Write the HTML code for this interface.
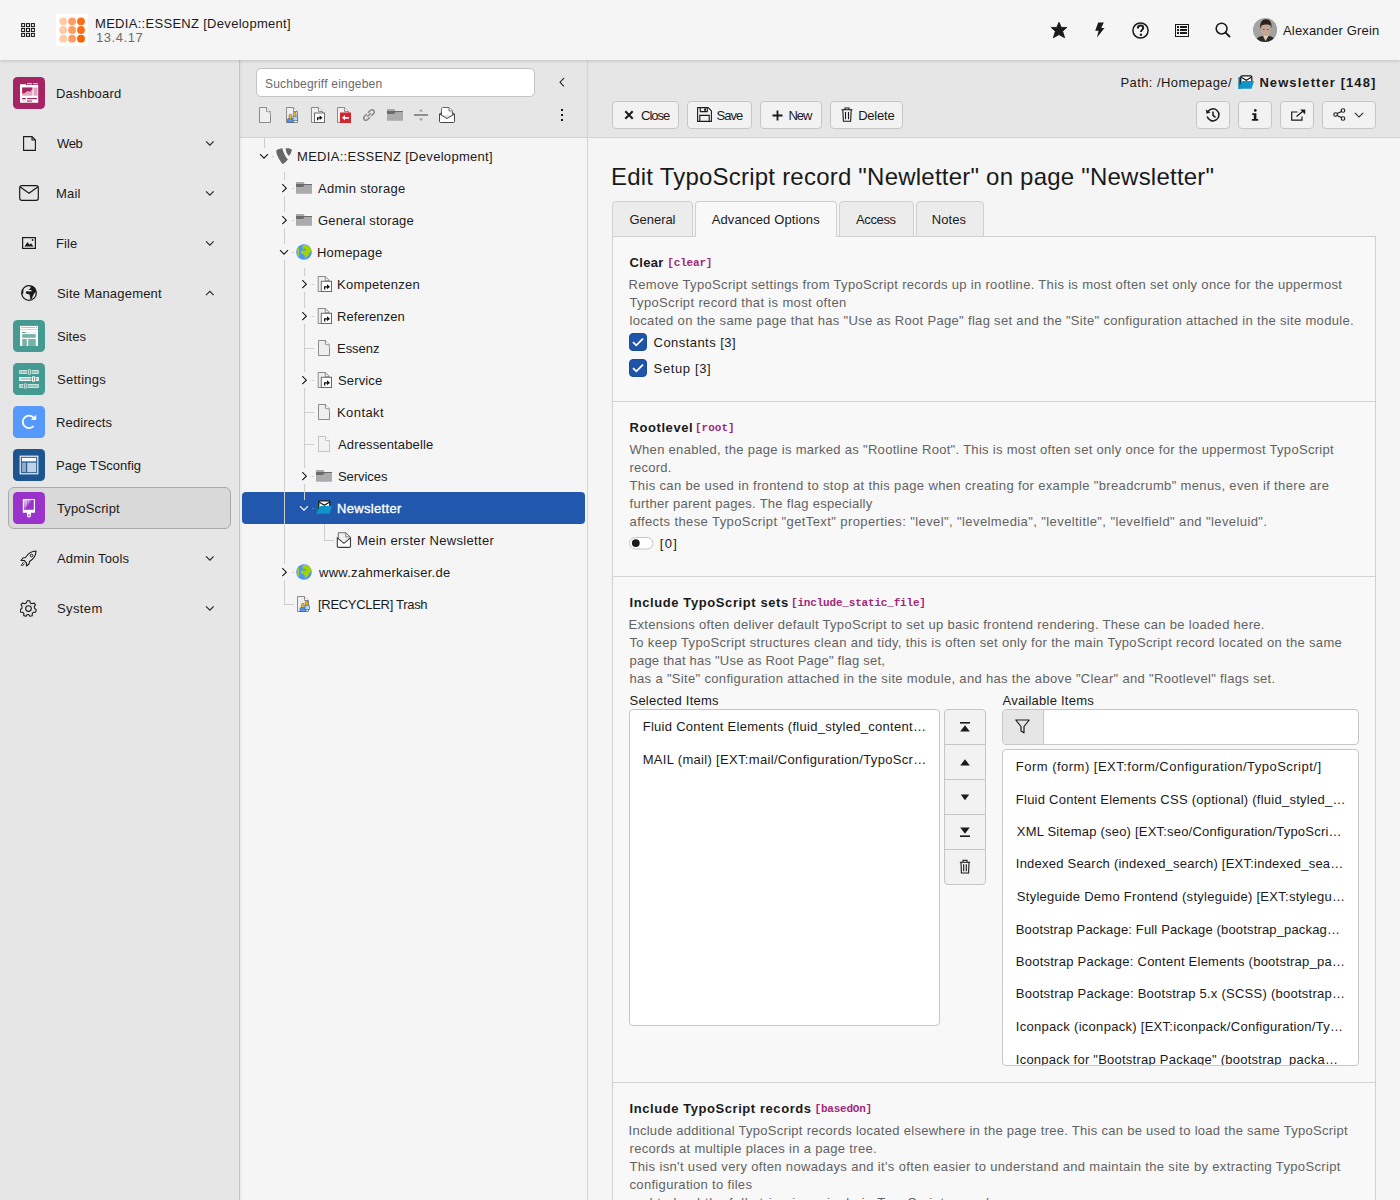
<!DOCTYPE html>
<html><head><meta charset="utf-8"><style>
*{box-sizing:border-box;margin:0;padding:0}
html,body{width:1400px;height:1200px;overflow:hidden;background:#f5f5f5;font-family:"Liberation Sans",sans-serif;font-size:13px;color:#1a1a1a}
.abs{position:absolute}
svg{display:block}
.t{position:absolute;white-space:nowrap}
#top{position:absolute;left:0;top:0;width:1400px;height:60px;background:#f5f5f5;z-index:5;box-shadow:0 1px 3px rgba(0,0,0,.16)}
#side{position:absolute;left:0;top:60px;width:240px;height:1140px;background:#e6e6e6;border-right:1px solid #c3c3c3}
#treehead{position:absolute;left:240px;top:60px;width:348px;height:78px;background:#e6e6e6;border-bottom:1px solid #d4d4d4;border-right:1px solid #d4d4d4}
#tree{position:absolute;left:240px;top:138px;width:348px;height:1062px;background:#f5f5f5;border-right:1px solid #d4d4d4}
#dochead{position:absolute;left:588px;top:60px;width:812px;height:78px;background:#e6e6e6;border-bottom:1px solid #d0d0d0}
#main{position:absolute;left:588px;top:138px;width:812px;height:1062px;background:#f5f5f5}
.btn{position:absolute;height:28px;border:1px solid #c6c6c6;border-radius:4px;background:#f2f2f2}
</style></head><body>
<div id="top">
<svg class="abs" style="left:21px;top:23px" width="14" height="14" viewBox="0 0 14 14" fill="none" stroke="#1a1a1a" stroke-width="1.05">
    <rect x="0.6" y="0.6" width="3" height="3"/><rect x="5.5" y="0.6" width="3" height="3"/><rect x="10.4" y="0.6" width="3" height="3"/>
    <rect x="0.6" y="5.5" width="3" height="3"/><rect x="5.5" y="5.5" width="3" height="3"/><rect x="10.4" y="5.5" width="3" height="3"/>
    <rect x="0.6" y="10.4" width="3" height="3"/><rect x="5.5" y="10.4" width="3" height="3"/><rect x="10.4" y="10.4" width="3" height="3"/></svg>
<svg class="abs" style="left:56px;top:14px" width="32" height="32" viewBox="0 0 32 32"><rect width="32" height="32" fill="#fff"/>
    <g fill="#ffcba9"><circle cx="7.2" cy="7.3" r="3.9"/><circle cx="7.2" cy="16" r="3.9"/><circle cx="7.2" cy="24.7" r="3.9"/></g>
    <g fill="#ff9d62"><circle cx="16.1" cy="7.3" r="3.9"/><circle cx="16.1" cy="16" r="3.9"/><circle cx="16.1" cy="24.7" r="3.9"/></g>
    <g fill="#ff6d1a"><circle cx="25" cy="7.3" r="3.9"/><circle cx="25" cy="16" r="3.9"/><circle cx="25" cy="24.7" r="3.9" fill="#ff6300"/></g></svg>
<div class="t" style="left:95px;top:16px;font:normal 13px/16px 'Liberation Sans',sans-serif;color:#1a1a1a;letter-spacing:0.299px;">MEDIA::ESSENZ [Development]</div>
<div class="t" style="left:96px;top:30px;font:normal 13px/16px 'Liberation Sans',sans-serif;color:#6b6b6b;letter-spacing:0.559px;">13.4.17</div>
<svg class="abs" style="left:1050px;top:21px" width="18" height="18" viewBox="0 0 18 18"><path d="M9 1.3 L11.3 6.4 L16.8 6.5 L12.6 10.3 L14.6 16.7 L9 13.6 L3.4 16.7 L5.4 10.3 L1.2 6.5 L6.7 6.4 Z" fill="#1a1a1a" stroke="#1a1a1a" stroke-width="0.9" stroke-linejoin="round"/></svg>
<svg class="abs" style="left:1094px;top:22px" width="11" height="16" viewBox="0 0 11 16"><path d="M4.2 0.5 H9.8 L7.2 6 H10.5 L3 15.5 L4.6 8.8 H1.2 Z" fill="#1a1a1a"/></svg>
<svg class="abs" style="left:1132px;top:21.5px" width="17" height="17" viewBox="0 0 17 17"><circle cx="8.5" cy="8.5" r="7.6" fill="none" stroke="#1a1a1a" stroke-width="1.5"/><path d="M5.8 6.4 C5.8 4.6 7 3.6 8.5 3.6 C10.1 3.6 11.2 4.6 11.2 6 C11.2 7.8 8.9 8 8.9 10" fill="none" stroke="#1a1a1a" stroke-width="2"/><circle cx="8.9" cy="12.8" r="1.2" fill="#1a1a1a"/></svg>
<svg class="abs" style="left:1175px;top:24px" width="14" height="13" viewBox="0 0 14 13" shape-rendering="crispEdges"><path d="M0 0 H14 V13 H0 Z M1.3 1.3 V11.7 H12.7 V1.3 Z" fill="#1a1a1a" fill-rule="evenodd"/><g fill="#1a1a1a"><rect x="2" y="2" width="2" height="2"/><rect x="5" y="2" width="7" height="2"/><rect x="2" y="5" width="2" height="2"/><rect x="5" y="5" width="7" height="2"/><rect x="2" y="8" width="2" height="2"/><rect x="5" y="8" width="7" height="2"/></g></svg>
<svg class="abs" style="left:1215px;top:22px" width="16" height="16" viewBox="0 0 16 16"><circle cx="6.6" cy="6.6" r="5.4" fill="none" stroke="#1a1a1a" stroke-width="1.6"/><path d="M10.6 10.6 L15 15" stroke="#1a1a1a" stroke-width="1.9"/></svg>
<svg class="abs" style="left:1253px;top:18px" width="24" height="24" viewBox="0 0 24 24"><defs><clipPath id="av"><circle cx="12" cy="12" r="12"/></clipPath></defs><g clip-path="url(#av)"><rect width="24" height="24" fill="#a4a4a2"/><rect x="15" width="9" height="24" fill="#9ea3a0"/><path d="M10 19 L11 17 H15 L16 19 L17 24 H9 Z" fill="#e2cbb5"/><path d="M2 24 C3 20 6 18.5 10 18 L12.5 23 L15.5 18 C19 18.5 22 20 23 24 Z" fill="#2a2a2a"/><ellipse cx="12.8" cy="12" rx="4.6" ry="6" fill="#c7a596"/><path d="M7.2 11 C6.5 4 9.5 1.2 13 1.2 C17 1.2 19 4 18.3 10 L17.5 7.5 C15.5 6 11 6.5 8.5 7.5 Z" fill="#2b201b"/><path d="M10 11.5 H11.5 M14 11.5 H15.5" stroke="#6a4a40" stroke-width="1"/></g></svg>
<div class="t" style="left:1283px;top:23px;font:normal 13px/16px 'Liberation Sans',sans-serif;color:#1a1a1a;letter-spacing:0.164px;">Alexander Grein</div>
</div>
<div id="side"></div>
<svg class="abs" style="left:13px;top:77px" width="32" height="32" viewBox="0 0 32 32"><rect width="32" height="32" rx="4.5" fill="#a52463"/>
      <path d="M7 7.2 H13 V8 H25.2 V25.8 H7 Z" fill="#fff"/>
      <rect x="14" y="6.3" width="5" height="0.9" fill="#fff"/><rect x="20" y="6.3" width="5" height="0.9" fill="#fff"/>
      <path d="M9.2 10.5 H19.5 V18.7 H9.2 Z" fill="#dfa6c1"/><path d="M9.2 10.5 H19.5 V12 L17.2 14.8 L14.5 14 L11.5 16.2 L9.2 16.5 Z" fill="#a52463"/>
      <rect x="20.6" y="10.5" width="4" height="8.2" fill="#dfa6c1"/>
      <rect x="9.2" y="21" width="3.5" height="1.2" fill="#a52463"/><rect x="9.2" y="22.3" width="3.5" height="1.2" fill="#dfa6c1"/>
      <rect x="14" y="21" width="10" height="1.2" fill="#a52463"/><rect x="14" y="23.5" width="5" height="1.1" fill="#a52463"/></svg>
<div class="t" style="left:56px;top:86px;font:normal 13px/16px 'Liberation Sans',sans-serif;color:#1a1a1a;letter-spacing:0.204px;">Dashboard</div>
<svg class="abs" style="left:23px;top:136px" width="13" height="15" viewBox="0 0 13 15"><path d="M0.6 0.6 H9 L12.4 4 V14.4 H0.6 Z M9 0.6 V4 H12.4" fill="none" stroke="#1a1a1a" stroke-width="1.1"/></svg>
<div class="t" style="left:57px;top:136px;font:normal 13px/16px 'Liberation Sans',sans-serif;color:#1a1a1a;letter-spacing:-0.383px;">Web</div>
<svg class="abs" style="left:204px;top:139px" width="11" height="8" viewBox="0 0 11 8"><path d="M2 2.3 L5.9 6.2 L9.6 2.3" fill="none" stroke="#2a2a2a" stroke-width="1.2"/></svg>
<svg class="abs" style="left:19px;top:185px" width="20" height="16" viewBox="0 0 20 16"><rect x="0.7" y="0.7" width="18.6" height="14.6" rx="2" fill="none" stroke="#1a1a1a" stroke-width="1.2"/><path d="M0.9 1.8 L10 8.2 L19.1 1.8" fill="none" stroke="#1a1a1a" stroke-width="1.2"/></svg>
<div class="t" style="left:56px;top:186px;font:normal 13px/16px 'Liberation Sans',sans-serif;color:#1a1a1a;letter-spacing:0.184px;">Mail</div>
<svg class="abs" style="left:204px;top:189px" width="11" height="8" viewBox="0 0 11 8"><path d="M2 2.3 L5.9 6.2 L9.6 2.3" fill="none" stroke="#2a2a2a" stroke-width="1.2"/></svg>
<svg class="abs" style="left:22px;top:237px" width="14" height="12" viewBox="0 0 14 12"><rect x="0.6" y="0.6" width="12.8" height="10.8" fill="none" stroke="#1a1a1a" stroke-width="1.2"/><path d="M2.5 9.5 L5.5 5 L7.5 7.8 L9 6.3 L11.5 9.5 Z" fill="#1a1a1a"/><circle cx="10.6" cy="3" r="0.9" fill="#1a1a1a"/></svg>
<div class="t" style="left:56px;top:236px;font:normal 13px/16px 'Liberation Sans',sans-serif;color:#1a1a1a;letter-spacing:0.094px;">File</div>
<svg class="abs" style="left:204px;top:239px" width="11" height="8" viewBox="0 0 11 8"><path d="M2 2.3 L5.9 6.2 L9.6 2.3" fill="none" stroke="#2a2a2a" stroke-width="1.2"/></svg>
<svg class="abs" style="left:21px;top:285px" width="16" height="16" viewBox="0 0 16 16"><circle cx="8" cy="8" r="7.3" fill="none" stroke="#1a1a1a" stroke-width="1.3"/><path d="M9.5 1 L12.8 1.6 L14.8 4 L15.3 6.8 L14 7.6 L12.3 10 L10.9 13.5 L9.6 15.2 L8.9 11.6 L8.6 9.6 L6.5 9.1 L5 8.6 L4.8 7 L6 6 L8.2 6.4 L10.6 6.2 L10.4 5 L7.6 5 L9.6 3 Z M0.8 5.5 L2.5 4.5 L2.2 8.5 L1 9 Z" fill="#1a1a1a"/></svg>
<div class="t" style="left:57px;top:286px;font:normal 13px/16px 'Liberation Sans',sans-serif;color:#1a1a1a;letter-spacing:0.194px;">Site Management</div>
<svg class="abs" style="left:204px;top:289px" width="11" height="8" viewBox="0 0 11 8"><path d="M2 6.2 L5.9 2.3 L9.6 6.2" fill="none" stroke="#2a2a2a" stroke-width="1.2"/></svg>
<svg class="abs" style="left:13px;top:320px" width="32" height="32" viewBox="0 0 32 32"><rect width="32" height="32" rx="4.5" fill="#459b91"/>
      <path d="M7 5.9 H25 V26 H7 Z" fill="#fff"/>
      <rect x="8.1" y="7" width="13.8" height="1" rx="0.5" fill="#9fcdc7"/><circle cx="23.4" cy="7.5" r="0.6" fill="#459b91"/>
      <rect x="7" y="9.1" width="18" height="0.7" fill="#a9d2cc"/>
      <rect x="9" y="12.1" width="3.8" height="0.9" rx="0.4" fill="#459b91"/>
      <g fill="#a9d2cc"><circle cx="14.4" cy="12.5" r="0.5"/><circle cx="16.5" cy="12.5" r="0.5"/><circle cx="20.4" cy="12.5" r="0.5"/><circle cx="22.5" cy="12.5" r="0.5"/></g>
      <rect x="9.2" y="14.1" width="13.6" height="3.7" fill="#75b2ab"/>
      <rect x="9.2" y="19" width="4.6" height="7" fill="#75b2ab"/><rect x="15.2" y="19" width="7.6" height="7" fill="#75b2ab"/></svg>
<div class="t" style="left:57px;top:329px;font:normal 13px/16px 'Liberation Sans',sans-serif;color:#1a1a1a;letter-spacing:0.025px;">Sites</div>
<svg class="abs" style="left:13px;top:363px" width="32" height="32" viewBox="0 0 32 32"><rect width="32" height="32" rx="4.5" fill="#459b91"/>
      <rect x="6.7" y="7.6" width="18.6" height="2.8" rx="0" fill="#8fc4bd" stroke="#d3e9e6" stroke-width="1"/>
      <rect x="15.4" y="6.6" width="2" height="4.8" rx="0.6" fill="#459b91" stroke="#459b91" stroke-width="2.4"/><rect x="15.4" y="6.6" width="2" height="4.8" rx="0.6" fill="#459b91" stroke="#d3e9e6" stroke-width="1"/>
      <rect x="6.7" y="14.6" width="18.6" height="2.8" rx="0" fill="#9ccbc5" stroke="#fff" stroke-width="1.1"/>
      <rect x="19.5" y="13.7" width="2" height="4.6" rx="0.6" fill="#459b91" stroke="#459b91" stroke-width="2.4"/><rect x="19.5" y="13.7" width="2" height="4.6" rx="0.6" fill="#459b91" stroke="#fff" stroke-width="1.1"/>
      <rect x="6.7" y="21.6" width="18.6" height="2.8" rx="0" fill="#8fc4bd" stroke="#d3e9e6" stroke-width="1"/>
      <rect x="11.5" y="20.7" width="1.9" height="4.7" rx="0.6" fill="#459b91" stroke="#459b91" stroke-width="2.4"/><rect x="11.5" y="20.7" width="1.9" height="4.7" rx="0.6" fill="#459b91" stroke="#d3e9e6" stroke-width="1"/></svg>
<div class="t" style="left:57px;top:372px;font:normal 13px/16px 'Liberation Sans',sans-serif;color:#1a1a1a;letter-spacing:0.261px;">Settings</div>
<svg class="abs" style="left:13px;top:406px" width="32" height="32" viewBox="0 0 32 32"><rect width="32" height="32" rx="4.5" fill="#5499fb"/>
      <path d="M20.6 20 A6.2 6.2 0 1 1 20.4 11.6" fill="none" stroke="#fff" stroke-width="1.8"/><path d="M17.9 14.1 L23.2 14.1 L23.2 8.8 Z" fill="#fff"/></svg>
<div class="t" style="left:56px;top:415px;font:normal 13px/16px 'Liberation Sans',sans-serif;color:#1a1a1a;letter-spacing:0.149px;">Redirects</div>
<svg class="abs" style="left:13px;top:449px" width="32" height="32" viewBox="0 0 32 32"><rect width="32" height="32" rx="4.5" fill="#1d5591"/>
      <rect x="7.2" y="7.2" width="17.6" height="17.6" fill="none" stroke="#fff" stroke-width="1.1"/>
      <rect x="8.8" y="8.8" width="14.4" height="3.6" fill="#fff"/>
      <rect x="8.8" y="13.6" width="4.3" height="9.6" fill="#8dabc9"/><rect x="14.2" y="13.6" width="9" height="9.6" fill="#c0d1e2"/></svg>
<div class="t" style="left:56px;top:458px;font:normal 13px/16px 'Liberation Sans',sans-serif;color:#1a1a1a;letter-spacing:-0.004px;">Page TSconfig</div>
<div class="abs" style="left:8px;top:487px;width:223px;height:42px;border:1px solid #a9a9a9;border-radius:6px;background:#d9d9d9"></div>
<svg class="abs" style="left:13px;top:492px" width="32" height="32" viewBox="0 0 32 32"><rect width="32" height="32" rx="4.5" fill="#9933cc"/>
      <path fill="#fff" fill-rule="evenodd" d="M9.8 6.9 H22 V20.8 H17.9 V23.6 A2 2 0 0 1 13.9 23.6 V20.8 H9.8 Z M11 8.1 V17.8 H20.8 V8.1 Z"/>
      <circle cx="15.9" cy="23.1" r="0.9" fill="#9933cc"/>
      <path d="M11.3 8 H12.7 L12.3 16.6 H11.7 Z M13.2 8 H14.4 L14 14.6 H13.6 Z" fill="#fff"/>
      <path d="M14.9 8 H16 L15.6 12.6 H15.3 Z M16.5 8 H17.5 L17.1 11 H16.9 Z" fill="#dcb8f0"/></svg>
<div class="t" style="left:57px;top:501px;font:normal 13px/16px 'Liberation Sans',sans-serif;color:#1a1a1a;letter-spacing:0.133px;">TypoScript</div>
<svg class="abs" style="left:20px;top:550px" width="17" height="17" viewBox="0 0 17 17"><path d="M16 1 C11 1 8 3.5 5.5 7.5 L3 8 L1 10.5 L4.2 10.5 L6.5 12.8 L6.5 16 L9 14 L9.5 11.5 C13.5 9 16 6 16 1 Z" fill="none" stroke="#1a1a1a" stroke-width="1.1" stroke-linejoin="round"/><circle cx="11.5" cy="5.5" r="1.3" fill="none" stroke="#1a1a1a" stroke-width="1"/><path d="M3.5 12 L1 16 M4.5 13.5 L2.5 16" stroke="#1a1a1a" stroke-width="0.9"/></svg>
<div class="t" style="left:57px;top:551px;font:normal 13px/16px 'Liberation Sans',sans-serif;color:#1a1a1a;letter-spacing:0.139px;">Admin Tools</div>
<svg class="abs" style="left:204px;top:554px" width="11" height="8" viewBox="0 0 11 8"><path d="M2 2.3 L5.9 6.2 L9.6 2.3" fill="none" stroke="#2a2a2a" stroke-width="1.2"/></svg>
<svg class="abs" style="left:20px;top:600px" width="17" height="17" viewBox="0 0 17 17"><path d="M7.2 0.8 H9.8 L10.3 2.9 L12 3.8 L14 2.9 L15.5 4.8 L14.2 6.5 L14.6 8.5 L16.3 9.6 L15.6 12.1 L13.5 12.2 L12.2 13.7 L12.3 15.8 L9.8 16.3 L8.8 14.5 H7.2 L6.2 16.3 L3.7 15.6 L3.9 13.5 L2.6 12.2 L0.6 12.1 L0.2 9.6 L1.9 8.5 L2.1 6.5 L1 4.8 L2.6 2.9 L4.5 3.8 L6.3 2.9 Z" fill="none" stroke="#1a1a1a" stroke-width="1.1" stroke-linejoin="round"/><circle cx="8.5" cy="8.6" r="2.8" fill="none" stroke="#1a1a1a" stroke-width="1.1"/></svg>
<div class="t" style="left:57px;top:601px;font:normal 13px/16px 'Liberation Sans',sans-serif;color:#1a1a1a;letter-spacing:0.397px;">System</div>
<svg class="abs" style="left:204px;top:604px" width="11" height="8" viewBox="0 0 11 8"><path d="M2 2.3 L5.9 6.2 L9.6 2.3" fill="none" stroke="#2a2a2a" stroke-width="1.2"/></svg>
<div id="treehead"></div>
<div class="abs" style="left:256px;top:68px;width:279px;height:29px;background:#fff;border:1px solid #c4c4c4;border-radius:5px"></div>
<div class="t" style="left:265px;top:76px;font:normal 12px/16px 'Liberation Sans',sans-serif;color:#6a6a6a;letter-spacing:0.204px;">Suchbegriff eingeben</div>
<svg class="abs" style="left:558px;top:77px" width="8" height="11" viewBox="0 0 8 11"><path d="M6 1.2 L2 5.2 L6 9.5" fill="none" stroke="#1a1a1a" stroke-width="1.05"/></svg>
<div class="abs" style="left:257px;top:107px"><svg width="16" height="16" viewBox="0 0 16 16"><path d="M2.5 0.5 H9.5 L13.5 4.5 V15.5 H2.5 Z" fill="#efefef" stroke="#8a8a8a"/><path d="M9.5 0.5 V4.5 H13.5" fill="#fff" stroke="#8a8a8a"/><path d="M10 4.5 H13.5 V8 Z" fill="#cfcfcf"/></svg></div>
<div class="abs" style="left:284px;top:107px"><svg width="16" height="16" viewBox="0 0 16 16"><path d="M2.5 0.5 H9.5 L13.5 4.5 V15.5 H2.5 Z" fill="#efefef" stroke="#8a8a8a"/><path d="M9.5 0.5 V4.5 H13.5" fill="#fff" stroke="#8a8a8a"/><path d="M3.5 15.5 V12.5 C3.5 11.8 4 11.5 4.5 11.5 H8.5 C9 11.5 9.5 11.8 9.5 12.5 V15.5 Z" fill="#4d94f0" stroke="#555" stroke-width="0.6"/><rect x="5.1" y="7.4" width="2.6" height="4.6" rx="1.2" fill="#f6b928" stroke="#555" stroke-width="0.6"/><path d="M9 13.5 V10 C9 9.5 9.5 9 10 9 H12.5 C13 9 13.5 9.5 13.5 10 V13.5 Z" fill="#a7d8ff" stroke="#555" stroke-width="0.6"/><rect x="9.4" y="5" width="2.6" height="4.6" rx="1.2" fill="#f6b928" stroke="#555" stroke-width="0.6"/></svg></div>
<div class="abs" style="left:310px;top:107px"><svg width="16" height="16" viewBox="0 0 16 16"><path d="M1.5 0.5 H8.5 L12.5 4.5 V15.5 H1.5 Z" fill="#efefef" stroke="#8a8a8a"/><path d="M8.5 0.5 V4.5 H12.5" fill="#fff" stroke="#8a8a8a"/><rect x="4.5" y="6" width="10" height="9.5" fill="#fff" stroke="#6a6a6a"/><path d="M7 13.2 V10.3 H9.7 V8.6 L12.5 10.8 L9.7 13 V11.6 H8.3 V13.2 Z" fill="#111"/></svg></div>
<div class="abs" style="left:336px;top:107px"><svg width="16" height="16" viewBox="0 0 16 16"><path d="M1.5 0.5 H8.5 L12.5 4.5 V15.5 H1.5 Z" fill="#efefef" stroke="#8a8a8a"/><path d="M8.5 0.5 V4.5 H12.5" fill="#fff" stroke="#8a8a8a"/><rect x="4" y="5.5" width="11" height="10.5" fill="#d0262f"/><path d="M6 10.8 L9 8 V9.9 H13 V11.7 H9 V13.6 Z" fill="#fff"/></svg></div>
<div class="abs" style="left:361px;top:107px"><svg width="16" height="16" viewBox="0 0 16 16"><g fill="none" stroke="#8a8a8a" stroke-width="1.6"><path d="M7 5.8 L9.3 3.5 C10.3 2.5 11.8 2.5 12.6 3.4 C13.5 4.2 13.5 5.7 12.5 6.7 L10.2 9"/><path d="M9 10.2 L6.7 12.5 C5.7 13.5 4.2 13.5 3.4 12.6 C2.5 11.8 2.5 10.3 3.5 9.3 L5.8 7"/><path d="M6.2 9.8 L9.8 6.2"/></g></svg></div>
<div class="abs" style="left:387px;top:107px"><svg width="16" height="16" viewBox="0 0 16 16"><path d="M0 2 H7.5 L8.6 4 H0 Z" fill="#aaaaaa"/><path d="M0 4 H16 V5.4 H8.6 L7.4 7 H0 Z" fill="#6b6b6b"/><path d="M0 7 H7.4 L8.6 5.4 H16 V13.8 H0 Z" fill="#ababab"/></svg></div>
<div class="abs" style="left:413px;top:107px"><svg width="16" height="16" viewBox="0 0 16 16"><rect x="1" y="7.2" width="14" height="1.6" fill="#7a7a7a"/><path d="M6 4.5 L8 2 L10 4.5 Z M6 11.5 L8 14 L10 11.5 Z" fill="#9a9a9a"/></svg></div>
<div class="abs" style="left:439px;top:107px"><svg width="16" height="16" viewBox="0 0 16 16"><path d="M2.5 8 V2 C2.5 1 3 0.5 4 0.5 H10 L13.5 4 V8" fill="#fff" stroke="#6a6a6a"/><path d="M10 0.5 V4 H13.5" fill="#fff" stroke="#6a6a6a"/><path d="M10.3 4.2 H13.3 V7 Z" fill="#cfcfcf"/><path d="M0.5 7 L8 11.5 L15.5 7 V14.5 C15.5 15 15 15.5 14.5 15.5 H1.5 C1 15.5 0.5 15 0.5 14.5 Z" fill="#fff" stroke="#444"/><path d="M0.5 7 L3 5.5 M15.5 7 L13 5.5" stroke="#444"/></svg></div>
<div class="abs" style="left:561px;top:109px;width:2px;height:2px;background:#111"></div><div class="abs" style="left:561px;top:114px;width:2px;height:2px;background:#111"></div><div class="abs" style="left:561px;top:119px;width:2px;height:2px;background:#111"></div>
<div id="tree"></div>
<div class="abs" style="left:240px;top:60px;width:3px;height:1140px;background:linear-gradient(90deg,rgba(0,0,0,.045),rgba(0,0,0,0))"></div>
<div class="abs" style="left:242px;top:492px;width:343px;height:32px;background:#2157ad;border-radius:4px"></div>
<div class="abs" style="left:264px;top:138px;width:1px;height:10px;background:#cdcdcd"></div>
<div class="abs" style="left:284px;top:172px;width:1px;height:8px;background:#cdcdcd"></div>
<div class="abs" style="left:284px;top:196px;width:1px;height:16px;background:#cdcdcd"></div>
<div class="abs" style="left:284px;top:228px;width:1px;height:16px;background:#cdcdcd"></div>
<div class="abs" style="left:284px;top:260px;width:1px;height:304px;background:#cdcdcd"></div>
<div class="abs" style="left:284px;top:580px;width:1px;height:24px;background:#cdcdcd"></div>
<div class="abs" style="left:304px;top:268px;width:1px;height:8px;background:#cdcdcd"></div>
<div class="abs" style="left:304px;top:292px;width:1px;height:16px;background:#cdcdcd"></div>
<div class="abs" style="left:304px;top:324px;width:1px;height:48px;background:#cdcdcd"></div>
<div class="abs" style="left:304px;top:388px;width:1px;height:80px;background:#cdcdcd"></div>
<div class="abs" style="left:304px;top:484px;width:1px;height:16px;background:#cdcdcd"></div>
<div class="abs" style="left:324px;top:524px;width:1px;height:16px;background:#cdcdcd"></div>
<svg class="abs" style="left:259px;top:152px" width="11" height="8" viewBox="0 0 11 8"><path d="M1 2.2 L5 6.2 L9 2.2" fill="none" stroke="#1a1a1a" stroke-width="1.15"/></svg>
<div class="abs" style="left:272px;top:156px;width:2px;height:1px;background:#cdcdcd"></div>
<div class="abs" style="left:276px;top:148px"><svg width="16" height="17" viewBox="0 0 16 17"><path d="M0.3 2.6 C2 1 4.5 0.3 6.4 0.2 C6.8 2.5 7.6 5 9.6 8.4 C10.5 9.8 11.2 10.8 11.9 11.4 C10 13.6 8.2 15.5 6.4 15.9 C4 13 1.5 9 0.5 5 Z" fill="#666"/><path d="M9.7 0.3 C11.8 0.1 14 0.4 15.8 1.4 C15.6 4 14.3 6.5 12.8 7.8 C11 6.5 9.8 3.5 9.7 0.3 Z" fill="#666"/></svg></div>
<div class="t" style="left:297px;top:149px;font:normal 13px/16px 'Liberation Sans',sans-serif;color:#1a1a1a;letter-spacing:0.299px;">MEDIA::ESSENZ [Development]</div>
<svg class="abs" style="left:281px;top:183px" width="8" height="11" viewBox="0 0 8 11"><path d="M1.3 1.2 L5.3 5.2 L1.3 9.2" fill="none" stroke="#1a1a1a" stroke-width="1.15"/></svg>
<div class="abs" style="left:292px;top:188px;width:2px;height:1px;background:#cdcdcd"></div>
<div class="abs" style="left:296px;top:180px"><svg width="16" height="16" viewBox="0 0 16 16"><path d="M0 2 H7.5 L8.6 4 H0 Z" fill="#aaaaaa"/><path d="M0 4 H16 V5.4 H8.6 L7.4 7 H0 Z" fill="#6b6b6b"/><path d="M0 7 H7.4 L8.6 5.4 H16 V13.8 H0 Z" fill="#ababab"/></svg></div>
<div class="t" style="left:318px;top:181px;font:normal 13px/16px 'Liberation Sans',sans-serif;color:#1a1a1a;letter-spacing:0.284px;">Admin storage</div>
<svg class="abs" style="left:281px;top:215px" width="8" height="11" viewBox="0 0 8 11"><path d="M1.3 1.2 L5.3 5.2 L1.3 9.2" fill="none" stroke="#1a1a1a" stroke-width="1.15"/></svg>
<div class="abs" style="left:292px;top:220px;width:2px;height:1px;background:#cdcdcd"></div>
<div class="abs" style="left:296px;top:212px"><svg width="16" height="16" viewBox="0 0 16 16"><path d="M0 2 H7.5 L8.6 4 H0 Z" fill="#aaaaaa"/><path d="M0 4 H16 V5.4 H8.6 L7.4 7 H0 Z" fill="#6b6b6b"/><path d="M0 7 H7.4 L8.6 5.4 H16 V13.8 H0 Z" fill="#ababab"/></svg></div>
<div class="t" style="left:318px;top:213px;font:normal 13px/16px 'Liberation Sans',sans-serif;color:#1a1a1a;letter-spacing:0.179px;">General storage</div>
<svg class="abs" style="left:279px;top:248px" width="11" height="8" viewBox="0 0 11 8"><path d="M1 2.2 L5 6.2 L9 2.2" fill="none" stroke="#1a1a1a" stroke-width="1.15"/></svg>
<div class="abs" style="left:292px;top:252px;width:2px;height:1px;background:#cdcdcd"></div>
<div class="abs" style="left:296px;top:244px"><svg width="16" height="16" viewBox="0 0 16 16"><circle cx="8" cy="8" r="7.8" fill="#4d96f4"/><path d="M7.3 1.1 C10 0.7 13.6 2 15 5 L15.3 7.4 L13.6 9 L12.2 11.4 L10.6 13 L9.1 14.9 L8.8 12.2 L8.2 10.6 L6.5 10.1 L5 9.1 L4.8 7.5 L6 6.4 L8.8 6.7 L10.2 5.8 L9.8 4.8 L7 5 L6.4 3 Z M1.3 5.2 L2.9 3.4 L3.2 7 L2.5 9 L3.6 11.4 L2.6 12.3 L1.1 10.2 Z M4.8 2 L5.8 1.6 L5.6 2.6 Z" fill="#a3d300"/></svg></div>
<div class="t" style="left:317px;top:245px;font:normal 13px/16px 'Liberation Sans',sans-serif;color:#1a1a1a;letter-spacing:0.233px;">Homepage</div>
<svg class="abs" style="left:301px;top:279px" width="8" height="11" viewBox="0 0 8 11"><path d="M1.3 1.2 L5.3 5.2 L1.3 9.2" fill="none" stroke="#1a1a1a" stroke-width="1.15"/></svg>
<div class="abs" style="left:312px;top:284px;width:2px;height:1px;background:#cdcdcd"></div>
<div class="abs" style="left:316px;top:276px"><svg width="16" height="16" viewBox="0 0 16 16"><path d="M2.2 0.5 H9.2 L13.5 4.8 V15.5 H2.2 Z" fill="#efefef" stroke="#8a8a8a"/><path d="M9.2 0.5 V4.8 H13.5 Z" fill="#fff" stroke="#8a8a8a" stroke-linejoin="round"/><rect x="5.3" y="5.3" width="10.2" height="10.2" fill="#fff" stroke="#6a6a6a"/><path d="M8 13.4 V10.2 H11 V8.3 L14 10.8 L11 13.3 V11.5 H9.3 V13.4 Z" fill="#111"/></svg></div>
<div class="t" style="left:337px;top:277px;font:normal 13px/16px 'Liberation Sans',sans-serif;color:#1a1a1a;letter-spacing:0.241px;">Kompetenzen</div>
<svg class="abs" style="left:301px;top:311px" width="8" height="11" viewBox="0 0 8 11"><path d="M1.3 1.2 L5.3 5.2 L1.3 9.2" fill="none" stroke="#1a1a1a" stroke-width="1.15"/></svg>
<div class="abs" style="left:312px;top:316px;width:2px;height:1px;background:#cdcdcd"></div>
<div class="abs" style="left:316px;top:308px"><svg width="16" height="16" viewBox="0 0 16 16"><path d="M2.2 0.5 H9.2 L13.5 4.8 V15.5 H2.2 Z" fill="#efefef" stroke="#8a8a8a"/><path d="M9.2 0.5 V4.8 H13.5 Z" fill="#fff" stroke="#8a8a8a" stroke-linejoin="round"/><rect x="5.3" y="5.3" width="10.2" height="10.2" fill="#fff" stroke="#6a6a6a"/><path d="M8 13.4 V10.2 H11 V8.3 L14 10.8 L11 13.3 V11.5 H9.3 V13.4 Z" fill="#111"/></svg></div>
<div class="t" style="left:337px;top:309px;font:normal 13px/16px 'Liberation Sans',sans-serif;color:#1a1a1a;letter-spacing:0.058px;">Referenzen</div>
<div class="abs" style="left:304px;top:348px;width:10px;height:1px;background:#cdcdcd"></div>
<div class="abs" style="left:316px;top:340px"><svg width="16" height="16" viewBox="0 0 16 16"><path d="M2.5 0.5 H9.5 L13.5 4.5 V15.5 H2.5 Z" fill="#efefef" stroke="#8a8a8a"/><path d="M9.5 0.5 V4.5 H13.5" fill="#fff" stroke="#8a8a8a"/><path d="M10 4.5 H13.5 V8 Z" fill="#d4d4d4"/></svg></div>
<div class="t" style="left:337px;top:341px;font:normal 13px/16px 'Liberation Sans',sans-serif;color:#1a1a1a;letter-spacing:-0.026px;">Essenz</div>
<svg class="abs" style="left:301px;top:375px" width="8" height="11" viewBox="0 0 8 11"><path d="M1.3 1.2 L5.3 5.2 L1.3 9.2" fill="none" stroke="#1a1a1a" stroke-width="1.15"/></svg>
<div class="abs" style="left:312px;top:380px;width:2px;height:1px;background:#cdcdcd"></div>
<div class="abs" style="left:316px;top:372px"><svg width="16" height="16" viewBox="0 0 16 16"><path d="M2.2 0.5 H9.2 L13.5 4.8 V15.5 H2.2 Z" fill="#efefef" stroke="#8a8a8a"/><path d="M9.2 0.5 V4.8 H13.5 Z" fill="#fff" stroke="#8a8a8a" stroke-linejoin="round"/><rect x="5.3" y="5.3" width="10.2" height="10.2" fill="#fff" stroke="#6a6a6a"/><path d="M8 13.4 V10.2 H11 V8.3 L14 10.8 L11 13.3 V11.5 H9.3 V13.4 Z" fill="#111"/></svg></div>
<div class="t" style="left:338px;top:373px;font:normal 13px/16px 'Liberation Sans',sans-serif;color:#1a1a1a;letter-spacing:0.147px;">Service</div>
<div class="abs" style="left:304px;top:412px;width:10px;height:1px;background:#cdcdcd"></div>
<div class="abs" style="left:316px;top:404px"><svg width="16" height="16" viewBox="0 0 16 16"><path d="M2.5 0.5 H9.5 L13.5 4.5 V15.5 H2.5 Z" fill="#efefef" stroke="#8a8a8a"/><path d="M9.5 0.5 V4.5 H13.5" fill="#fff" stroke="#8a8a8a"/><path d="M10 4.5 H13.5 V8 Z" fill="#d4d4d4"/></svg></div>
<div class="t" style="left:337px;top:405px;font:normal 13px/16px 'Liberation Sans',sans-serif;color:#1a1a1a;letter-spacing:0.421px;">Kontakt</div>
<div class="abs" style="left:304px;top:444px;width:10px;height:1px;background:#cdcdcd"></div>
<div class="abs" style="left:316px;top:436px"><svg width="16" height="16" viewBox="0 0 16 16"><path d="M2.5 0.5 H9.5 L13.5 4.5 V15.5 H2.5 Z" fill="#f2f2f2" stroke="#c4c4c4"/><path d="M9.5 0.5 V4.5 H13.5" fill="#fff" stroke="#c4c4c4"/></svg></div>
<div class="t" style="left:338px;top:437px;font:normal 13px/16px 'Liberation Sans',sans-serif;color:#1a1a1a;letter-spacing:0.143px;">Adressentabelle</div>
<svg class="abs" style="left:301px;top:471px" width="8" height="11" viewBox="0 0 8 11"><path d="M1.3 1.2 L5.3 5.2 L1.3 9.2" fill="none" stroke="#1a1a1a" stroke-width="1.15"/></svg>
<div class="abs" style="left:312px;top:476px;width:2px;height:1px;background:#cdcdcd"></div>
<div class="abs" style="left:316px;top:468px"><svg width="16" height="16" viewBox="0 0 16 16"><path d="M0 2 H7.5 L8.6 4 H0 Z" fill="#aaaaaa"/><path d="M0 4 H16 V5.4 H8.6 L7.4 7 H0 Z" fill="#6b6b6b"/><path d="M0 7 H7.4 L8.6 5.4 H16 V13.8 H0 Z" fill="#ababab"/></svg></div>
<div class="t" style="left:338px;top:469px;font:normal 13px/16px 'Liberation Sans',sans-serif;color:#1a1a1a;letter-spacing:-0.050px;">Services</div>
<svg class="abs" style="left:299px;top:504px" width="11" height="8" viewBox="0 0 11 8"><path d="M1 2.2 L5 6.2 L9 2.2" fill="none" stroke="#fff" stroke-width="1.15"/></svg>
<div class="abs" style="left:312px;top:508px;width:2px;height:1px;background:#5b80c0"></div>
<div class="abs" style="left:316px;top:500px"><svg width="16" height="16" viewBox="0 0 16 16"><path d="M0.4 2.2 H3 V13.8 H0.4 Z" fill="#0b6f93"/><rect x="2.8" y="0.8" width="11" height="8" rx="1.2" fill="#fff" stroke="#111" stroke-width="1.2"/><path d="M3.3 2.2 L8.3 5.3 L13.3 2.2" fill="none" stroke="#111" stroke-width="1.1"/><path d="M4.4 6 H16 L13.6 13.8 H0 Z" fill="#0e95c9"/></svg></div>
<div class="t" style="left:337px;top:501px;font:normal 13px/16px 'Liberation Sans',sans-serif;color:#fff;letter-spacing:0.325px;-webkit-text-stroke:0.35px #fff;">Newsletter</div>
<div class="abs" style="left:324px;top:540px;width:10px;height:1px;background:#cdcdcd"></div>
<div class="abs" style="left:336px;top:532px"><svg width="16" height="16" viewBox="0 0 16 16"><path d="M2.3 9 V0.7 H9.8 L14 4.9 V9" fill="#efefef" stroke="#707070"/><path d="M9.8 0.7 V4.9 H14 Z" fill="#fff" stroke="#707070" stroke-linejoin="round"/><path d="M10.3 5.3 H13.6 V8.5 Z" fill="#cdcdcd"/><path d="M1.3 5.8 L7.9 11.3 L14.5 5.8 V14.3 C14.5 15 14 15.4 13.4 15.4 H2.4 C1.8 15.4 1.3 15 1.3 14.3 Z" fill="#fff" stroke="#3c3c3c" stroke-width="1.1"/></svg></div>
<div class="t" style="left:357px;top:533px;font:normal 13px/16px 'Liberation Sans',sans-serif;color:#1a1a1a;letter-spacing:0.323px;">Mein erster Newsletter</div>
<svg class="abs" style="left:281px;top:567px" width="8" height="11" viewBox="0 0 8 11"><path d="M1.3 1.2 L5.3 5.2 L1.3 9.2" fill="none" stroke="#1a1a1a" stroke-width="1.15"/></svg>
<div class="abs" style="left:292px;top:572px;width:2px;height:1px;background:#cdcdcd"></div>
<div class="abs" style="left:296px;top:564px"><svg width="16" height="16" viewBox="0 0 16 16"><circle cx="8" cy="8" r="7.8" fill="#4d96f4"/><path d="M7.3 1.1 C10 0.7 13.6 2 15 5 L15.3 7.4 L13.6 9 L12.2 11.4 L10.6 13 L9.1 14.9 L8.8 12.2 L8.2 10.6 L6.5 10.1 L5 9.1 L4.8 7.5 L6 6.4 L8.8 6.7 L10.2 5.8 L9.8 4.8 L7 5 L6.4 3 Z M1.3 5.2 L2.9 3.4 L3.2 7 L2.5 9 L3.6 11.4 L2.6 12.3 L1.1 10.2 Z M4.8 2 L5.8 1.6 L5.6 2.6 Z" fill="#a3d300"/></svg></div>
<div class="t" style="left:319px;top:565px;font:normal 13px/16px 'Liberation Sans',sans-serif;color:#1a1a1a;letter-spacing:0.266px;">www.zahmerkaiser.de</div>
<div class="abs" style="left:284px;top:604px;width:10px;height:1px;background:#cdcdcd"></div>
<div class="abs" style="left:296px;top:596px"><svg width="16" height="16" viewBox="0 0 16 16"><path d="M1.5 0.5 H8.5 L12.5 4.5 V15.5 H1.5 Z" fill="#efefef" stroke="#8a8a8a"/><path d="M8.5 0.5 V4.5 H12.5" fill="#fff" stroke="#8a8a8a"/><path d="M4 15.5 V12.5 C4 11.8 4.5 11.5 5 11.5 H9 C9.5 11.5 10 11.8 10 12.5 V15.5 Z" fill="#4d94f0" stroke="#555" stroke-width="0.6"/><rect x="5.6" y="7.4" width="2.6" height="4.6" rx="1.2" fill="#f6b928" stroke="#555" stroke-width="0.6"/><path d="M9 13.5 V10 C9 9.5 9.5 9 10 9 H12.5 C13 9 13.5 9.5 13.5 10 V13.5 Z" fill="#a7d8ff" stroke="#555" stroke-width="0.6"/><rect x="9.4" y="5" width="2.6" height="4.6" rx="1.2" fill="#f6b928" stroke="#555" stroke-width="0.6"/></svg></div>
<div class="t" style="left:318px;top:597px;font:normal 13px/16px 'Liberation Sans',sans-serif;color:#1a1a1a;letter-spacing:-0.303px;">[RECYCLER] Trash</div>
<div id="dochead"></div>
<div id="main"></div>
<div class="t" style="left:1120.4px;top:75px;font:normal 13px/16px 'Liberation Sans',sans-serif;color:#1a1a1a;letter-spacing:0.428px;">Path: /Homepage/</div>
<div class="abs" style="left:1238px;top:75px"><svg width="16" height="16" viewBox="0 0 16 16"><path d="M0.4 2.2 H3 V13.8 H0.4 Z" fill="#0b6f93"/><rect x="2.8" y="0.8" width="11" height="8" rx="1.2" fill="#fff" stroke="#111" stroke-width="1.2"/><path d="M3.3 2.2 L8.3 5.3 L13.3 2.2" fill="none" stroke="#111" stroke-width="1.1"/><path d="M4.4 6 H16 L13.6 13.8 H0 Z" fill="#0e95c9"/></svg></div>
<div class="t" style="left:1259.4px;top:75px;font:bold 13px/16px 'Liberation Sans',sans-serif;color:#1a1a1a;letter-spacing:1.081px;">Newsletter [148]</div>
<div class="btn" style="left:612px;top:101px;width:67px;height:28px;background:#f2f2f2"></div>
<div class="btn" style="left:687px;top:101px;width:65px;height:28px;background:#f2f2f2"></div>
<div class="btn" style="left:760px;top:101px;width:62px;height:28px;background:#f2f2f2"></div>
<div class="btn" style="left:830px;top:101px;width:73px;height:28px;background:#f2f2f2"></div>
<svg class="abs" style="left:624px;top:110px" width="10" height="10" viewBox="0 0 10 10"><path d="M1.3 1.3 L8.7 8.7 M8.7 1.3 L1.3 8.7" stroke="#1a1a1a" stroke-width="2"/></svg>
<div class="t" style="left:641px;top:108px;font:normal 13px/16px 'Liberation Sans',sans-serif;color:#1a1a1a;letter-spacing:-1.002px;">Close</div>
<svg class="abs" style="left:697px;top:107px" width="15" height="15" viewBox="0 0 15 15"><path d="M0.6 0.6 H11.2 L14.4 3.8 V14.4 H0.6 Z" fill="none" stroke="#1a1a1a" stroke-width="1.1" stroke-linejoin="round"/><path d="M3.3 0.6 V4.6 H10.3 V0.6" fill="none" stroke="#1a1a1a" stroke-width="1.1"/><rect x="7.2" y="1.4" width="1.8" height="2.4" fill="#1a1a1a"/><path d="M2.8 14.4 V8.4 H12.2 V14.4" fill="none" stroke="#1a1a1a" stroke-width="1.1"/></svg>
<div class="t" style="left:716.5px;top:108px;font:normal 13px/16px 'Liberation Sans',sans-serif;color:#1a1a1a;letter-spacing:-0.967px;">Save</div>
<svg class="abs" style="left:772px;top:110px" width="11" height="11" viewBox="0 0 11 11"><path d="M5.5 0.5 V10.5 M0.5 5.5 H10.5" stroke="#1a1a1a" stroke-width="1.8"/></svg>
<div class="t" style="left:788.4px;top:108px;font:normal 13px/16px 'Liberation Sans',sans-serif;color:#1a1a1a;letter-spacing:-1.059px;">New</div>
<svg class="abs" style="left:841px;top:107px" width="12" height="15" viewBox="0 0 12 15"><path d="M0.5 2.8 H11.5 M4 2.8 V1 H8 V2.8" fill="none" stroke="#1a1a1a" stroke-width="1.1"/><path d="M1.8 2.8 L2.4 14.3 H9.6 L10.2 2.8" fill="none" stroke="#1a1a1a" stroke-width="1.1"/><path d="M4.5 5 V12.3 M7.5 5 V12.3" stroke="#1a1a1a" stroke-width="1.1"/></svg>
<div class="t" style="left:858.2px;top:108px;font:normal 13px/16px 'Liberation Sans',sans-serif;color:#1a1a1a;letter-spacing:-0.230px;">Delete</div>
<div class="btn" style="left:1196px;top:101px;width:34px;height:28px;background:#f2f2f2"></div>
<div class="btn" style="left:1238px;top:101px;width:34px;height:28px;background:#f2f2f2"></div>
<div class="btn" style="left:1280px;top:101px;width:34px;height:28px;background:#f2f2f2"></div>
<div class="btn" style="left:1322px;top:101px;width:54px;height:28px;background:#f2f2f2"></div>
<svg class="abs" style="left:1205px;top:107px" width="16" height="16" viewBox="0 0 16 16"><path d="M2.6 5.2 A6 6 0 1 1 2.2 9.5" fill="none" stroke="#1a1a1a" stroke-width="1.5"/><path d="M0.8 2.5 L1.5 6.8 L5.6 5.5 Z" fill="#1a1a1a"/><path d="M8 4.5 V8.3 L10.5 10.3" fill="none" stroke="#1a1a1a" stroke-width="1.5"/></svg>
<svg class="abs" style="left:1251px;top:109px" width="8" height="12" viewBox="0 0 8 12"><circle cx="4.3" cy="1.4" r="1.35" fill="#1a1a1a"/><path d="M1.2 4.3 H5.4 V10.1 H7.2 V11.8 H0.9 V10.1 H2.8 V6 H1.2 Z" fill="#1a1a1a"/></svg>
<svg class="abs" style="left:1291px;top:109px" width="15" height="12" viewBox="0 0 15 12"><path d="M6.5 3 H0.7 V11.2 H11 V7.5" fill="none" stroke="#1a1a1a" stroke-width="1.2"/><path d="M5.5 7.5 L12.8 1.5" stroke="#1a1a1a" stroke-width="1.3"/><path d="M9.2 0.4 H14.2 V5.4 Z" fill="#1a1a1a"/></svg>
<svg class="abs" style="left:1333px;top:108px" width="13" height="13" viewBox="0 0 13 13"><circle cx="10" cy="2.5" r="1.8" fill="none" stroke="#1a1a1a" stroke-width="1.1"/><circle cx="2.6" cy="6.5" r="1.8" fill="none" stroke="#1a1a1a" stroke-width="1.1"/><circle cx="10" cy="10.5" r="1.8" fill="none" stroke="#1a1a1a" stroke-width="1.1"/><path d="M4.2 5.6 L8.4 3.4 M4.2 7.4 L8.4 9.6" stroke="#1a1a1a" stroke-width="1.1"/></svg>
<svg class="abs" style="left:1354px;top:112px" width="10" height="6" viewBox="0 0 10 6"><path d="M0.8 0.8 L5 5 L9.2 0.8" fill="none" stroke="#333" stroke-width="1.1"/></svg>
<div class="t" style="left:611px;top:163px;font:normal 24px/28px 'Liberation Sans',sans-serif;color:#1a1a1a;letter-spacing:0.219px;">Edit TypoScript record "Newletter" on page "Newsletter"</div>
<div class="abs" style="left:612px;top:236px;width:764px;height:964px;background:#f8f8f8;border:1px solid #d0d0d0;border-bottom:none"></div>
<div class="abs" style="left:612px;top:201px;width:81px;height:36px;background:#ececec;border:1px solid #d0d0d0;border-radius:4px 4px 0 0"></div>
<div class="t" style="left:629.5px;top:212px;font:normal 13px/16px 'Liberation Sans',sans-serif;color:#1a1a1a;letter-spacing:-0.043px;">General</div>
<div class="abs" style="left:695px;top:201px;width:142px;height:36px;background:#f8f8f8;border:1px solid #d0d0d0;border-bottom:none;border-radius:4px 4px 0 0"></div>
<div class="t" style="left:711.7px;top:212px;font:normal 13px/16px 'Liberation Sans',sans-serif;color:#1a1a1a;letter-spacing:0.118px;">Advanced Options</div>
<div class="abs" style="left:839px;top:201px;width:75px;height:36px;background:#ececec;border:1px solid #d0d0d0;border-radius:4px 4px 0 0"></div>
<div class="t" style="left:856px;top:212px;font:normal 13px/16px 'Liberation Sans',sans-serif;color:#1a1a1a;letter-spacing:-0.380px;">Access</div>
<div class="abs" style="left:916px;top:201px;width:68px;height:36px;background:#ececec;border:1px solid #d0d0d0;border-radius:4px 4px 0 0"></div>
<div class="t" style="left:931.8px;top:212px;font:normal 13px/16px 'Liberation Sans',sans-serif;color:#1a1a1a;letter-spacing:0.085px;">Notes</div>
<div class="abs" style="left:613px;top:401px;width:762px;height:1px;background:#d4d4d4"></div>
<div class="abs" style="left:613px;top:576px;width:762px;height:1px;background:#d4d4d4"></div>
<div class="abs" style="left:613px;top:1082px;width:762px;height:1px;background:#d4d4d4"></div>
<div class="t" style="left:629.5px;top:255px;font:bold 13px/16px 'Liberation Sans',sans-serif;color:#1a1a1a;letter-spacing:0.335px;">Clear</div>
<div class="t" style="left:667.3px;top:255px;font:bold 11px/16px 'Liberation Mono',sans-serif;color:#a0287a;letter-spacing:-0.184px;">[clear]</div>
<div class="t" style="left:628.5px;top:276px;font:normal 13px/18px 'Liberation Sans',sans-serif;color:#626262;letter-spacing:0.326px;">Remove TypoScript settings from TypoScript records up in rootline. This is most often set only once for the uppermost</div>
<div class="t" style="left:629.5px;top:294px;font:normal 13px/18px 'Liberation Sans',sans-serif;color:#626262;letter-spacing:0.350px;">TypoScript record that is most often</div>
<div class="t" style="left:629.5px;top:312px;font:normal 13px/18px 'Liberation Sans',sans-serif;color:#626262;letter-spacing:0.321px;">located on the same page that has "Use as Root Page" flag set and the "Site" configuration attached in the site module.</div>
<svg class="abs" style="left:629px;top:333px" width="18" height="18" viewBox="0 0 18 18"><rect x="0.5" y="0.5" width="17" height="17" rx="3.5" fill="#1f55a9" stroke="#1a4c99"/><path d="M4 9.2 L7.3 12.3 L14 5.6" fill="none" stroke="#fff" stroke-width="1.8"/></svg>
<div class="t" style="left:653.6px;top:335px;font:normal 13px/16px 'Liberation Sans',sans-serif;color:#1a1a1a;letter-spacing:0.443px;">Constants [3]</div>
<svg class="abs" style="left:629px;top:359px" width="18" height="18" viewBox="0 0 18 18"><rect x="0.5" y="0.5" width="17" height="17" rx="3.5" fill="#1f55a9" stroke="#1a4c99"/><path d="M4 9.2 L7.3 12.3 L14 5.6" fill="none" stroke="#fff" stroke-width="1.8"/></svg>
<div class="t" style="left:653.6px;top:361px;font:normal 13px/16px 'Liberation Sans',sans-serif;color:#1a1a1a;letter-spacing:0.622px;">Setup [3]</div>
<div class="t" style="left:629.5px;top:420px;font:bold 13px/16px 'Liberation Sans',sans-serif;color:#1a1a1a;letter-spacing:0.575px;">Rootlevel</div>
<div class="t" style="left:695px;top:420px;font:bold 11px/16px 'Liberation Mono',sans-serif;color:#a0287a;letter-spacing:-0.001px;">[root]</div>
<div class="t" style="left:629.5px;top:441px;font:normal 13px/18px 'Liberation Sans',sans-serif;color:#626262;letter-spacing:0.303px;">When enabled, the page is marked as "Rootline Root". This is most often set only once for the uppermost TypoScript</div>
<div class="t" style="left:629.5px;top:459px;font:normal 13px/18px 'Liberation Sans',sans-serif;color:#626262;letter-spacing:0.225px;">record.</div>
<div class="t" style="left:629.5px;top:477px;font:normal 13px/18px 'Liberation Sans',sans-serif;color:#626262;letter-spacing:0.356px;">This can be used in frontend to stop at this page when creating for example "breadcrumb" menus, even if there are</div>
<div class="t" style="left:629.5px;top:495px;font:normal 13px/18px 'Liberation Sans',sans-serif;color:#626262;letter-spacing:0.276px;">further parent pages. The flag especially</div>
<div class="t" style="left:629.5px;top:513px;font:normal 13px/18px 'Liberation Sans',sans-serif;color:#626262;letter-spacing:0.405px;">affects these TypoScript "getText" properties: "level", "levelmedia", "leveltitle", "levelfield" and "leveluid".</div>
<svg class="abs" style="left:629px;top:537px" width="25" height="13" viewBox="0 0 25 13"><rect x="0.5" y="0.5" width="23.5" height="11.5" rx="5.75" fill="#fff" stroke="#c2c2c2"/><circle cx="6.8" cy="6.1" r="3.9" fill="#1a1a1a"/></svg>
<div class="t" style="left:659.8px;top:536px;font:normal 13px/16px 'Liberation Sans',sans-serif;color:#1a1a1a;letter-spacing:1.329px;">[0]</div>
<div class="t" style="left:629.5px;top:595px;font:bold 13px/16px 'Liberation Sans',sans-serif;color:#1a1a1a;letter-spacing:0.593px;">Include TypoScript sets</div>
<div class="t" style="left:791px;top:595px;font:bold 11px/16px 'Liberation Mono',sans-serif;color:#a0287a;letter-spacing:-0.186px;">[include_static_file]</div>
<div class="t" style="left:628.5px;top:616px;font:normal 13px/18px 'Liberation Sans',sans-serif;color:#626262;letter-spacing:0.303px;">Extensions often deliver default TypoScript to set up basic frontend rendering. These can be loaded here.</div>
<div class="t" style="left:629.5px;top:634px;font:normal 13px/18px 'Liberation Sans',sans-serif;color:#626262;letter-spacing:0.329px;">To keep TypoScript structures clean and tidy, this is often set only for the main TypoScript record located on the same</div>
<div class="t" style="left:629.5px;top:652px;font:normal 13px/18px 'Liberation Sans',sans-serif;color:#626262;letter-spacing:0.223px;">page that has "Use as Root Page" flag set,</div>
<div class="t" style="left:629.5px;top:670px;font:normal 13px/18px 'Liberation Sans',sans-serif;color:#626262;letter-spacing:0.331px;">has a "Site" configuration attached in the site module, and has the above "Clear" and "Rootlevel" flags set.</div>
<div class="t" style="left:629.5px;top:693px;font:normal 13px/16px 'Liberation Sans',sans-serif;color:#1a1a1a;letter-spacing:0.232px;">Selected Items</div>
<div class="t" style="left:1002.5px;top:693px;font:normal 13px/16px 'Liberation Sans',sans-serif;color:#1a1a1a;letter-spacing:0.235px;">Available Items</div>
<div class="abs" style="left:629px;top:709px;width:311px;height:317px;background:#fff;border:1px solid #c6c6c6;border-radius:4px"></div>
<div class="t" style="left:642.7px;top:719px;font:normal 13px/16px 'Liberation Sans',sans-serif;color:#1a1a1a;letter-spacing:0.278px;">Fluid Content Elements (fluid_styled_content…</div>
<div class="t" style="left:642.7px;top:752px;font:normal 13px/16px 'Liberation Sans',sans-serif;color:#1a1a1a;letter-spacing:0.321px;">MAIL (mail) [EXT:mail/Configuration/TypoScr…</div>
<div class="abs" style="left:944px;top:709px;width:42px;height:176px;background:#f2f2f2;border:1px solid #c6c6c6;border-radius:4px"></div>
<div class="abs" style="left:945px;top:744px;width:40px;height:1px;background:#c6c6c6"></div>
<div class="abs" style="left:945px;top:779px;width:40px;height:1px;background:#c6c6c6"></div>
<div class="abs" style="left:945px;top:814px;width:40px;height:1px;background:#c6c6c6"></div>
<div class="abs" style="left:945px;top:849px;width:40px;height:1px;background:#c6c6c6"></div>
<svg class="abs" style="left:959px;top:721px" width="12" height="12" viewBox="0 0 12 12"><rect x="1" y="1" width="10" height="1.6" fill="#1a1a1a"/><path d="M1.2 10.5 L6 4.3 L10.8 10.5 Z" fill="#1a1a1a"/></svg>
<svg class="abs" style="left:959px;top:756px" width="12" height="12" viewBox="0 0 12 12"><path d="M1.2 9.5 L6 3.3 L10.8 9.5 Z" fill="#1a1a1a"/></svg>
<svg class="abs" style="left:959px;top:791px" width="12" height="12" viewBox="0 0 12 12"><path d="M1.8 3.5 L6 9.2 L10.2 3.5 Z" fill="#1a1a1a"/></svg>
<svg class="abs" style="left:959px;top:826px" width="12" height="12" viewBox="0 0 12 12"><path d="M1.2 1.5 L6 7.7 L10.8 1.5 Z" fill="#1a1a1a"/><rect x="1" y="9.4" width="10" height="1.6" fill="#1a1a1a"/></svg>
<svg class="abs" style="left:959px;top:859px" width="12" height="15" viewBox="0 0 12 15"><path d="M0.8 3.2 H11.2 M4 3.2 V1.2 H8 V3.2" fill="none" stroke="#1a1a1a" stroke-width="1.1"/><path d="M2 3.2 L2.4 14 H9.6 L10 3.2" fill="none" stroke="#1a1a1a" stroke-width="1.1"/><path d="M4.7 5.2 V12.2 M7.3 5.2 V12.2" stroke="#1a1a1a" stroke-width="1.1"/></svg>
<div class="abs" style="left:1002px;top:709px;width:357px;height:36px;background:#fff;border:1px solid #c6c6c6;border-radius:4px;overflow:hidden"><div class="abs" style="left:0;top:0;width:41px;height:34px;background:#e6e6e6;border-right:1px solid #c6c6c6"></div></div>
<svg class="abs" style="left:1015px;top:719px" width="15" height="15" viewBox="0 0 15 15"><path d="M0.8 1 H14.2 L9 7.5 V13.8 L6 12 V7.5 Z" fill="none" stroke="#1a1a1a" stroke-width="1.2" stroke-linejoin="round"/></svg>
<div class="abs" style="left:1002px;top:749px;width:357px;height:317px;background:#fff;border:1px solid #c6c6c6;border-radius:4px"></div>
<div class="abs" style="left:1003px;top:750px;width:355px;height:315px;overflow:hidden;border-radius:3px">
<div class="t" style="left:12.8px;top:9px;font:normal 13px/16px 'Liberation Sans',sans-serif;color:#1a1a1a;letter-spacing:0.484px;">Form (form) [EXT:form/Configuration/TypoScript/]</div>
<div class="t" style="left:12.8px;top:42px;font:normal 13px/16px 'Liberation Sans',sans-serif;color:#1a1a1a;letter-spacing:0.252px;">Fluid Content Elements CSS (optional) (fluid_styled_…</div>
<div class="t" style="left:13.8px;top:74px;font:normal 13px/16px 'Liberation Sans',sans-serif;color:#1a1a1a;letter-spacing:0.208px;">XML Sitemap (seo) [EXT:seo/Configuration/TypoScri…</div>
<div class="t" style="left:12.8px;top:106px;font:normal 13px/16px 'Liberation Sans',sans-serif;color:#1a1a1a;letter-spacing:0.229px;">Indexed Search (indexed_search) [EXT:indexed_sea…</div>
<div class="t" style="left:13.8px;top:139px;font:normal 13px/16px 'Liberation Sans',sans-serif;color:#1a1a1a;letter-spacing:0.278px;">Styleguide Demo Frontend (styleguide) [EXT:stylegu…</div>
<div class="t" style="left:12.8px;top:172px;font:normal 13px/16px 'Liberation Sans',sans-serif;color:#1a1a1a;letter-spacing:0.155px;">Bootstrap Package: Full Package (bootstrap_packag…</div>
<div class="t" style="left:12.8px;top:204px;font:normal 13px/16px 'Liberation Sans',sans-serif;color:#1a1a1a;letter-spacing:0.244px;">Bootstrap Package: Content Elements (bootstrap_pa…</div>
<div class="t" style="left:12.8px;top:236px;font:normal 13px/16px 'Liberation Sans',sans-serif;color:#1a1a1a;letter-spacing:0.254px;">Bootstrap Package: Bootstrap 5.x (SCSS) (bootstrap…</div>
<div class="t" style="left:12.8px;top:269px;font:normal 13px/16px 'Liberation Sans',sans-serif;color:#1a1a1a;letter-spacing:0.287px;">Iconpack (iconpack) [EXT:iconpack/Configuration/Ty…</div>
<div class="t" style="left:12.8px;top:302px;font:normal 13px/16px 'Liberation Sans',sans-serif;color:#1a1a1a;letter-spacing:0.237px;">Iconpack for "Bootstrap Package" (bootstrap_packa…</div>
</div>
<div class="t" style="left:629.5px;top:1101px;font:bold 13px/16px 'Liberation Sans',sans-serif;color:#1a1a1a;letter-spacing:0.567px;">Include TypoScript records</div>
<div class="t" style="left:814.6px;top:1101px;font:bold 11px/16px 'Liberation Mono',sans-serif;color:#a0287a;letter-spacing:-0.239px;">[basedOn]</div>
<div class="t" style="left:628.5px;top:1122px;font:normal 13px/18px 'Liberation Sans',sans-serif;color:#626262;letter-spacing:0.285px;">Include additional TypoScript records located elsewhere in the page tree. This can be used to load the same TypoScript</div>
<div class="t" style="left:629.5px;top:1140px;font:normal 13px/18px 'Liberation Sans',sans-serif;color:#626262;letter-spacing:0.317px;">records at multiple places in a page tree.</div>
<div class="t" style="left:629.5px;top:1158px;font:normal 13px/18px 'Liberation Sans',sans-serif;color:#626262;letter-spacing:0.347px;">This isn't used very often nowadays and it's often easier to understand and maintain the site by extracting TypoScript</div>
<div class="t" style="left:629.5px;top:1176px;font:normal 13px/18px 'Liberation Sans',sans-serif;color:#626262;letter-spacing:0.323px;">configuration to files</div>
<div class="t" style="left:629.5px;top:1194px;font:normal 13px/18px 'Liberation Sans',sans-serif;color:#626262;letter-spacing:0.623px;">and to load the full string in a single in TypoScript records.</div>
</body></html>
